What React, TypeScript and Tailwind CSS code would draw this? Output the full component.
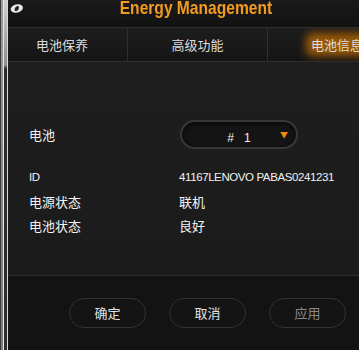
import React from 'react'

const cjk = "font-['Noto_Sans_CJK_SC','Noto_Sans',sans-serif]"

function LeftStrip() {
  return (
    <div className="flex h-full w-[8px] shrink-0">
      <div className="w-[1px] bg-[#3c3c3c]" />
      <div className="w-[2px] bg-gradient-to-b from-[#9a9a9a] to-[#7a7a7a]" />
      <div className="w-[1px] bg-[#e6e6e6]" />
      <div className="flex w-[3px] flex-col bg-[#2c2c2c]">
        <div className="h-[66px] bg-gradient-to-b from-[#d0d0d0] to-[#8c8c8c]" />
        <div className="h-[2px] bg-[#5a5a5a]" />
      </div>
      <div className="w-[1px] bg-[#d8d8d8]" />
    </div>
  )
}

function Tabs() {
  return (
    <div className={`flex h-[33px] whitespace-nowrap bg-gradient-to-b from-[#1d1d1d] to-[#151515] text-[13px] text-[#dcdcdc] ${cjk}`}>
      <div className="flex w-[120px] items-center border-r border-[#303030] pl-[28px]">电池保养</div>
      <div className="flex w-[140px] items-center justify-center border-r border-[#303030]">高级功能</div>
      <div className="flex min-w-0 flex-1 items-center overflow-hidden pl-[43px]">
        <span className="relative shrink-0">
          <span className="absolute -inset-x-[5px] -inset-y-[2px] rounded-md bg-[#9a5a06] blur-[4px]" />
          <span className="relative">电池信息</span>
        </span>
      </div>
    </div>
  )
}

function Row({ label, value }: { label: string; value: string }) {
  return (
    <div className="flex h-[24px] items-center">
      <div className="w-[150px]">{label}</div>
      <div>{value}</div>
    </div>
  )
}

function Btn({ children, dim }: { children: React.ReactNode; dim?: boolean }) {
  return (
    <button
      className={`flex h-[30px] w-[77px] items-center justify-center rounded-full border border-[#333] bg-[#141414] text-[13px] ${dim ? 'text-[#8a8a8a]' : 'text-[#e2e2e2]'}`}
    >
      {children}
    </button>
  )
}

export default function App() {
  return (
    <div className="flex h-[350px] w-[359px] overflow-hidden bg-black">
      <LeftStrip />
      <div className="flex min-w-0 flex-1 flex-col">
        <div className="relative flex h-[28px] items-start justify-center border-b border-[#2e2e2e] bg-gradient-to-b from-[#1a1a1a] to-[#121212]">
          <svg className="absolute left-[2px] top-[4px]" width="14" height="9" viewBox="0 0 14 9">
            <ellipse cx="7" cy="4.5" rx="6" ry="4.3" transform="skewX(-15) translate(1 0)" fill="#e8e8e8" />
            <ellipse cx="7" cy="4.5" rx="2" ry="2.6" transform="skewX(-15) translate(1 0)" fill="#222" />
          </svg>
          <span className="ml-[24px] mt-[-4px] scale-x-[0.82] whitespace-nowrap font-['Liberation_Sans',sans-serif] text-[19px] font-bold leading-[24px] text-[#f39a20]">
            Energy Management
          </span>
        </div>
        <Tabs />
        <div className={`flex flex-1 flex-col border-y border-[#2e2e2e] bg-gradient-to-b from-[#1e1e1e] to-[#1b1b1b] pl-[21px] text-[13px] text-[#f2f2f2] ${cjk}`}>
          <div className="mt-[58px] flex items-center">
            <div className="w-[151px]">电池</div>
            <div className="relative flex h-[29px] w-[118px] items-center justify-center rounded-full border-2 border-[#383838] bg-[#141414] shadow-[inset_0_1px_4px_rgba(0,0,0,0.8)]">
              <span className="mt-[6px] font-['Liberation_Sans',sans-serif] text-[12px]">#&nbsp;&nbsp;&nbsp;1</span>
              <span className="absolute right-[8px] top-[7px] text-[8px] text-[#f08a10]">▼</span>
            </div>
          </div>
          <div className="mt-[17px] font-['Liberation_Sans',sans-serif] text-[11.5px] tracking-[-0.4px]">
            <Row label="ID" value="41167LENOVO PABAS0241231" />
          </div>
          <Row label="电源状态" value="联机" />
          <Row label="电池状态" value="良好" />
        </div>
        <div className={`flex h-[74px] items-start gap-[23px] bg-[#131313] pl-[61px] pt-[22px] ${cjk}`}>
          <Btn>确定</Btn>
          <Btn>取消</Btn>
          <Btn dim>应用</Btn>
        </div>
      </div>
    </div>
  )
}
